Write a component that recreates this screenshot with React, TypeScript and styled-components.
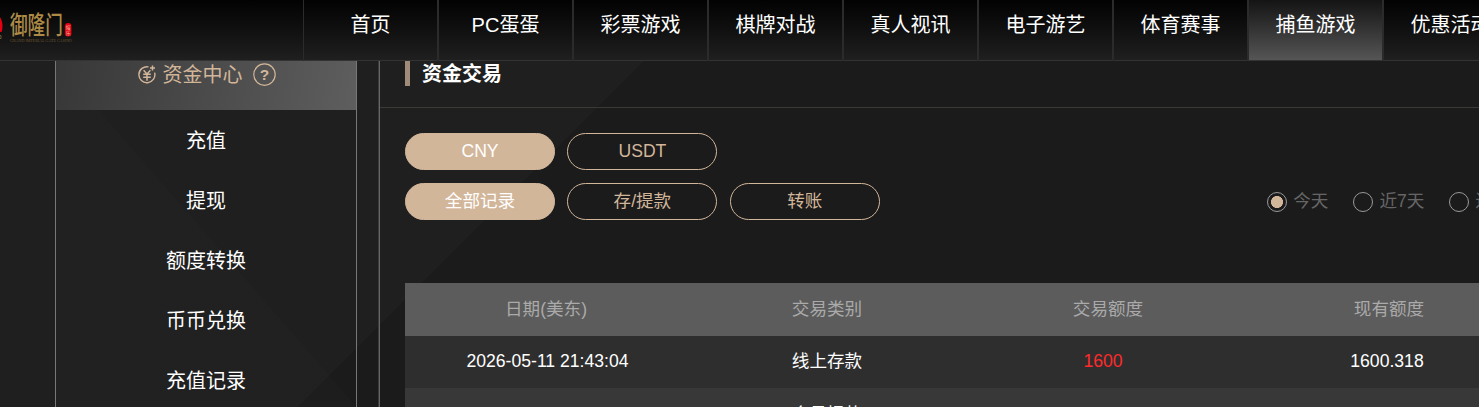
import React from "react";
import styled, { createGlobalStyle, css } from "styled-components";

const sans = `"Liberation Sans", "Noto Sans CJK SC", sans-serif`;

const GlobalStyle = createGlobalStyle`
  * { box-sizing: border-box; }
  body {
    margin: 0;
    overflow: hidden;
    background: #1b1b1b;
    font-family: ${sans};
    color: #fff;
  }
`;

const Page = styled.div`
  width: 1479px;
  height: 407px;
  overflow: hidden;
  display: flex;
  flex-direction: column;
  background:
    linear-gradient(135deg, #1f1f1f 0 498.5px, transparent 498.5px) no-repeat,
    #1b1b1b;
`;

const Header = styled.header`
  display: flex;
  flex: none;
  height: 61px;
  background: linear-gradient(#020202, #1f1f1f);
  border-bottom: 1px solid #333;
`;

const Brand = styled.div`
  width: 303px;
  flex: none;
  svg { display: block; }
`;

const Nav = styled.nav`
  display: flex;
  flex: none;
  height: 61px;
`;

const NavItem = styled.a<{ $active?: boolean }>`
  flex: none;
  width: 135px;
  height: ${(p) => (p.$active ? 60 : 61)}px;
  border-left: 1px solid #2b2b2b;
  border-right: 1px solid #2b2b2b;
  font-size: 20px;
  line-height: 50px;
  text-align: center;
  white-space: nowrap;
  ${(p) => p.$active && css`background: linear-gradient(#141414, #555);`}
`;

const Body = styled.main`
  display: flex;
  flex: 1;
  min-height: 0;
`;

const Sidebar = styled.aside`
  width: 302px;
  margin-left: 55px;
  flex: none;
  border: solid #777;
  border-width: 0 1px;
  background: linear-gradient(49deg, rgba(255, 255, 255, 0.008) 50%, transparent 50%);
`;

const SidebarTitle = styled.div`
  display: flex;
  justify-content: center;
  height: 49px;
  padding: 2px 0 0 1px;
  background: linear-gradient(100deg, #373737, #5e5e5e);
  color: #d2b69a;
  font-size: 20px;
  line-height: 25px;
  svg { display: block; flex: none; }
  span { margin: 0 10px 0 7px; }
`;

const MenuItem = styled.div`
  height: 60px;
  line-height: 62px;
  font-size: 20px;
  text-align: center;
`;

const Content = styled.section`
  flex: 1;
  min-width: 0;
  margin-left: 21px;
  border-left: 1px solid #3a3a3a;
  box-shadow: inset 1px 0 #666;
  padding-left: 1px;
`;

const ContentTitle = styled.div`
  display: flex;
  align-items: flex-start;
  height: 47px;
  padding-left: 25px;
  border-bottom: 1px solid #3b3a37;
  font-size: 20px;
  font-weight: 700;
  line-height: 26px;
`;

const Marker = styled.i`
  width: 5px;
  height: 25px;
  margin-right: 12px;
  background: #a08b78;
`;

const Filters = styled.div`
  display: flex;
  align-items: flex-start;
  padding-left: 25px;
  margin-top: 25px;
  gap: 12.4px;
  height: 37px;
  & + & { margin-top: 13px; }
`;

const Pill = styled.button<{ $on?: boolean }>`
  flex: none;
  width: 150px;
  height: 37px;
  padding: 0;
  border: 1px solid #d2b69a;
  border-radius: 19px;
  background: ${(p) => (p.$on ? "#d2b69a" : "transparent")};
  color: ${(p) => (p.$on ? "#fff" : "#d2b69a")};
  font: 17.6px/33px ${sans};
`;

const Ranges = styled.div`
  display: flex;
  flex: none;
  margin-left: 375px;
`;

const Range = styled.label`
  display: flex;
  flex: none;
  align-items: center;
  height: 36px;
  margin-right: 25px;
  color: #666;
  font-size: 17.6px;
  line-height: 36px;
  white-space: nowrap;
`;

const Radio = styled.span<{ $on?: boolean }>`
  width: 20px;
  height: 20px;
  margin: 2px 6px 0 0;
  border: 1px solid #999;
  border-radius: 50%;
  ${(p) => p.$on && css`background: radial-gradient(circle, #d2b69a 5.7px, transparent 6.3px);`}
`;

const Table = styled.div`
  width: 1124px;
  margin: 63px 0 0 25px;
`;

const Row = styled.div<{ $kind?: "head" | "odd" | "even" }>`
  display: grid;
  grid-template-columns: repeat(4, 281px);
  height: ${(p) => (p.$kind === "head" ? 53 : 52)}px;
  line-height: ${(p) => ({ head: 52, odd: 50, even: 53 })[p.$kind ?? "odd"]}px;
  background: ${(p) => ({ head: "#5c5c5c", odd: "#2e2e2e", even: "#383838" })[p.$kind ?? "odd"]};
  color: ${(p) => (p.$kind === "head" ? "#aaa" : "#fff")};
  font-size: 17.6px;
  text-align: center;
`;

const Cell = styled.div<{ $tone?: "date" | "debit" | "balance" }>`
  padding-left: 1px;
  ${(p) => p.$tone === "date" && css`padding-left: 4px;`}
  ${(p) => p.$tone === "debit" && css`padding-right: 10px; color: #ff2a2a;`}
  ${(p) => p.$tone === "balance" && css`padding-right: 4px;`}
`;

const nav = ["首页", "PC蛋蛋", "彩票游戏", "棋牌对战", "真人视讯", "电子游艺", "体育赛事", "捕鱼游戏", "优惠活动"];
const menu = ["充值", "提现", "额度转换", "币币兑换", "充值记录"];

const Logo = () => (
  <svg width="90" height="60" viewBox="0 0 90 60">
    <path d="M0 17C3 22 3 28 1.5 32H0Z" fill="#e60012" />
    <path d="M0 35.5h1v3H0" stroke="#6b5a32" fill="none" />
    <text transform="translate(10 33.8) scale(.72 1)" fontSize="24.5" fontWeight="500" fill="#ad8b47" fontFamily='"Noto Sans CJK SC", sans-serif'>御隆门</text>
    <rect x="65" y="23" width="6.4" height="13.5" rx="3" fill="#e60012" />
    <text x="65.8" y="29.3" fontSize="5" fill="#f5b9a0" fontFamily='"Noto Sans CJK SC", sans-serif'>娱</text>
    <text x="65.8" y="34.6" fontSize="5" fill="#f5b9a0" fontFamily='"Noto Sans CJK SC", sans-serif'>乐</text>
    <text x="10" y="42.3" fontSize="4" fill="#6b5730" fontFamily='"Liberation Serif", serif' textLength="62" lengthAdjust="spacingAndGlyphs">GRAND IMPERIAL GATE CASINO</text>
  </svg>
);

const CoinIcon = () => (
  <svg width="18" height="24" viewBox="0 0 18 24" fill="none" stroke="currentColor" strokeWidth="1.4">
    <path d="M10.5 3.9A8 8 0 1 0 16.6 9.6" />
    <path d="M5.6 7.3 9 11l3.4-3.7M5.2 11.3h7.6M5.2 14.2h7.6M9 11v6.8" strokeWidth="1.5" />
    <path d="M14.5 2.6v5M12 5.1h5" strokeWidth="1.5" />
  </svg>
);

const HelpIcon = () => (
  <svg width="23" height="24" viewBox="0 0 23 24">
    <circle cx="11.5" cy="11.6" r="10.7" fill="none" stroke="currentColor" strokeWidth="1.2" />
    <text x="11.5" y="17" textAnchor="middle" fontFamily='"Liberation Sans", sans-serif' fontWeight="700" fontSize="15.5" fill="currentColor">?</text>
  </svg>
);

export default function App() {
  return (
    <>
      <GlobalStyle />
      <Page>
        <Header>
          <Brand><Logo /></Brand>
          <Nav>
            {nav.map((label) => (
              <NavItem key={label} $active={label === "捕鱼游戏"}>{label}</NavItem>
            ))}
          </Nav>
        </Header>
        <Body>
          <Sidebar>
            <SidebarTitle><CoinIcon /><span>资金中心</span><HelpIcon /></SidebarTitle>
            {menu.map((label) => <MenuItem key={label}>{label}</MenuItem>)}
          </Sidebar>
          <Content>
            <ContentTitle><Marker />资金交易</ContentTitle>
            <Filters>
              <Pill $on>CNY</Pill>
              <Pill>USDT</Pill>
            </Filters>
            <Filters>
              <Pill $on>全部记录</Pill>
              <Pill>存/提款</Pill>
              <Pill>转账</Pill>
              <Ranges>
                <Range><Radio $on />今天</Range>
                <Range><Radio />近7天</Range>
                <Range><Radio />近30天</Range>
              </Ranges>
            </Filters>
            <Table>
              <Row $kind="head">
                <Cell>日期(美东)</Cell><Cell>交易类别</Cell><Cell>交易额度</Cell><Cell>现有额度</Cell>
              </Row>
              <Row $kind="odd">
                <Cell $tone="date">2026-05-11 21:43:04</Cell><Cell>线上存款</Cell><Cell $tone="debit">1600</Cell><Cell $tone="balance">1600.318</Cell>
              </Row>
              <Row $kind="even">
                <Cell /><Cell>会员提款</Cell><Cell /><Cell />
              </Row>
            </Table>
          </Content>
        </Body>
      </Page>
    </>
  );
}
